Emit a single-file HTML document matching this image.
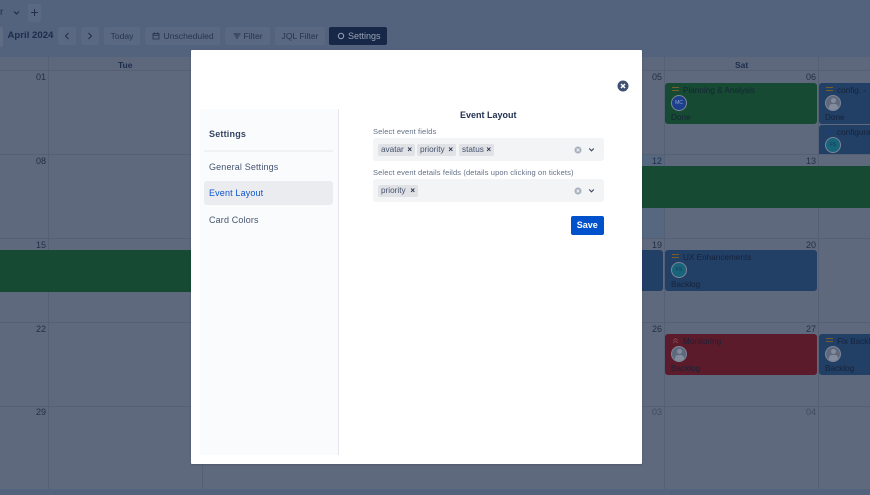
<!DOCTYPE html>
<html><head><meta charset="utf-8">
<style>
html,body{margin:0;padding:0}
body{width:870px;height:495px;overflow:hidden;position:relative;background:#53627d;font-family:"Liberation Sans",sans-serif;color:#25324f}
.a{position:absolute}
.t{position:absolute;white-space:nowrap;line-height:12px}
.btn{position:absolute;top:27px;height:18px;background:#5a6981;border-radius:2px;font-size:8.6px;line-height:18px;text-align:center;color:#26344f;white-space:nowrap}
.hl{position:absolute;left:0;width:870px;height:1px;background:#556074}
.vl{position:absolute;top:57px;height:432px;width:1px;background:#556074}
.n{position:absolute;font-size:9px;line-height:12px;color:#232e47;text-align:right;width:20px}
.e{position:absolute;height:41px;border-radius:3px;overflow:hidden;color:#20304f;font-size:8.2px}
.g{background:#174a32}.b{background:#223f66}.r{background:#5c1b2a}
.e .ti{position:absolute;left:18px;top:2px;line-height:11px;white-space:nowrap;color:#16233a}
.e .st{position:absolute;left:6px;top:29px;line-height:11px;white-space:nowrap;color:#16233a}
.e .p{position:absolute;left:7px;top:4px;width:7px;height:4px;border-top:1px solid #7a5e28;border-bottom:1px solid #7a5e28;box-sizing:border-box}
.e .av{position:absolute;left:6px;top:12px;width:14px;height:14px;border:1px solid #7c8699;border-radius:50%;font-size:5px;line-height:14px;text-align:center;overflow:hidden}
.pa{background:#5f697d}
.pa:before{content:"";position:absolute;left:4.5px;top:2px;width:5px;height:5px;border-radius:50%;background:#838c9c}
.pa:after{content:"";position:absolute;left:2.5px;top:8px;width:9px;height:7px;border-radius:3px 3px 0 0;background:#838c9c}
.box{position:absolute;left:373px;width:230.5px;height:23px;background:#f3f4f6;border-radius:3px}
.tag{position:absolute;top:6px;height:12px;background:#e0e2e6;border-radius:2px;font-size:8.2px;line-height:12px;color:#44506a;box-sizing:border-box}
.tag b{position:absolute;right:3px;top:0;font-size:8px;color:#26324a;font-weight:700}
.lab{position:absolute;left:373px;font-size:7.5px;line-height:10px;color:#626f86;letter-spacing:.13px;white-space:nowrap}
.m{position:absolute;font-size:9px;line-height:12px;color:#44546f;white-space:nowrap;letter-spacing:.15px}
</style></head>
<body>
<!-- top bar -->
<div class="t" style="left:0;top:7px;font-size:10px;color:#222f4a">r</div>
<svg class="a" style="left:13px;top:10px" width="7" height="6" viewBox="0 0 7 6"><path d="M1 1.5L3.5 4L6 1.5" fill="none" stroke="#202b45" stroke-width="1.1"/></svg>
<div class="a" style="left:28px;top:4px;width:13px;height:18px;background:#5a6981;border-radius:2px"></div>
<svg class="a" style="left:30px;top:8px" width="9" height="9" viewBox="0 0 9 9"><path d="M4.5 1v7M1 4.5h7" stroke="#222f4a" stroke-width="1"/></svg>
<div class="a" style="left:0;top:27px;width:3px;height:20px;background:#5f6c84;border-radius:0 2px 2px 0"></div>
<div class="t" style="left:7.5px;top:30px;font-size:9.6px;font-weight:700;color:#1e2c4c">April 2024</div>
<div class="btn" style="left:58px;width:18px"></div>
<svg class="a" style="left:64px;top:32px" width="6" height="8" viewBox="0 0 6 8"><path d="M4.5 1L1.5 4L4.5 7" fill="none" stroke="#222f4a" stroke-width="1.1"/></svg>
<div class="btn" style="left:81px;width:18px"></div>
<svg class="a" style="left:87px;top:32px" width="6" height="8" viewBox="0 0 6 8"><path d="M1.5 1L4.5 4L1.5 7" fill="none" stroke="#222f4a" stroke-width="1.1"/></svg>
<div class="btn" style="left:104px;width:36px">Today</div>
<div class="btn" style="left:145px;width:75px"><span style="position:absolute;left:18.5px">Unscheduled</span></div>
<svg class="a" style="left:152px;top:32px" width="8" height="8" viewBox="0 0 8 8"><path d="M1 1.5h6v5.5H1zM1 3.2h6M2.5.5v1.5M5.5.5v1.5" fill="none" stroke="#222f4a" stroke-width=".8"/></svg>
<div class="btn" style="left:225px;width:45px"><span style="position:absolute;left:18.5px">Filter</span></div>
<svg class="a" style="left:233px;top:33px" width="8" height="7" viewBox="0 0 8 7"><path d="M.5 1h7M1.8 3h4.4M3 5h2" stroke="#222f4a" stroke-width="1"/></svg>
<div class="btn" style="left:275px;width:50px">JQL Filter</div>
<div class="btn" style="left:329px;width:58px;background:#162747;color:#98a2b5;font-size:9px"><span style="position:absolute;left:19px">Settings</span></div>
<svg class="a" style="left:337px;top:32px" width="8" height="8" viewBox="0 0 8 8"><circle cx="4" cy="4" r="2.7" fill="none" stroke="#98a2b5" stroke-width="1"/></svg>

<!-- calendar -->
<div class="a" style="left:0;top:57px;width:870px;height:432px;background:#5f697d"></div>
<div class="a" style="left:0;top:57px;width:870px;height:14px;background:#5d687d"></div>
<div class="a" style="left:642px;top:155px;width:22px;height:83px;background:#556880"></div>
<div class="hl" style="top:70px"></div>
<div class="hl" style="top:154px"></div>
<div class="hl" style="top:238px"></div>
<div class="hl" style="top:322px"></div>
<div class="hl" style="top:406px"></div>
<div class="vl" style="left:48px"></div>
<div class="vl" style="left:202px"></div>
<div class="vl" style="left:664px"></div>
<div class="vl" style="left:818px"></div>
<div class="t" style="left:118px;top:59px;font-size:8.5px;font-weight:700;color:#1e2c4c">Tue</div>
<div class="t" style="left:735px;top:59px;font-size:8.5px;font-weight:700;color:#1e2c4c">Sat</div>
<div class="n" style="left:26px;top:71px">01</div>
<div class="n" style="left:26px;top:155px">08</div>
<div class="n" style="left:26px;top:239px">15</div>
<div class="n" style="left:26px;top:323px">22</div>
<div class="n" style="left:26px;top:406px">29</div>
<div class="n" style="left:642px;top:71px">05</div>
<div class="n" style="left:796px;top:71px">06</div>
<div class="n" style="left:642px;top:155px">12</div>
<div class="n" style="left:796px;top:155px">13</div>
<div class="n" style="left:642px;top:239px">19</div>
<div class="n" style="left:796px;top:239px">20</div>
<div class="n" style="left:642px;top:323px">26</div>
<div class="n" style="left:796px;top:323px">27</div>
<div class="n" style="left:642px;top:406px;color:#404c62">03</div>
<div class="n" style="left:796px;top:406px;color:#404c62">04</div>

<div class="e g" style="left:665px;top:83px;width:152px"><span class="p"></span><span class="ti">Planning &amp; Analysis</span><span class="av" style="background:#1c408c;color:#8fa4cf">MC</span><span class="st">Done</span></div>
<div class="e b" style="left:819px;top:83px;width:60px"><span class="p"></span><span class="ti">config. -</span><span class="av pa"></span><span class="st">Done</span></div>
<div class="e b" style="left:819px;top:125px;width:60px;height:29px;border-radius:3px 0 0 0"><svg class="a" style="left:7px;top:4px" width="7" height="5" viewBox="0 0 7 5"><path d="M1 1l2.5 2.5L6 1" fill="none" stroke="#1c408c" stroke-width="1.2"/></svg><span class="ti">configura</span><span class="av" style="background:#17647b;color:#1c3550">FS</span></div>
<div class="a g" style="left:642px;top:166px;width:228px;height:42px"></div>
<div class="a g" style="left:0;top:250px;width:191px;height:42px"></div>
<div class="a b" style="left:642px;top:250px;width:21px;height:41px;border-radius:0 3px 3px 0"></div>
<div class="e b" style="left:665px;top:250px;width:152px"><span class="p"></span><span class="ti">UX Enhancements</span><span class="av" style="background:#17647b;color:#1c3550">FS</span><span class="st">Backlog</span></div>
<div class="e r" style="left:665px;top:334px;width:152px"><svg class="a" style="left:7px;top:3px" width="7" height="7" viewBox="0 0 7 7"><path d="M1 3.5l2.5-2 2.5 2M1 6l2.5-2 2.5 2" fill="none" stroke="#7d424a" stroke-width=".9"/></svg><span class="ti">Monitoring</span><span class="av pa"></span><span class="st">Backlog</span></div>
<div class="e b" style="left:819px;top:334px;width:60px"><span class="p"></span><span class="ti">Fix Backlog</span><span class="av pa"></span><span class="st">Backlog</span></div>

<!-- modal -->
<div class="a" style="left:191px;top:50px;width:451px;height:414px;background:#fff;border-radius:1px;box-shadow:0 1px 2px rgba(30,40,60,.25)"></div>
<svg class="a" style="left:617px;top:80px" width="12" height="12" viewBox="0 0 12 12"><circle cx="6" cy="6" r="5.5" fill="#3f5173"/><path d="M4 4l4 4M8 4l-4 4" stroke="#fff" stroke-width="1.5"/></svg>

<div class="a" style="left:200px;top:109px;width:138px;height:346px;background:#fafbfc;border-right:1px solid #e4e6ea"></div>
<div class="t" style="left:209px;top:128px;font-size:9px;font-weight:700;color:#344563;letter-spacing:.2px">Settings</div>
<div class="a" style="left:204px;top:150px;width:129px;height:2px;background:#f0f1f3"></div>
<div class="m" style="left:209px;top:160.5px">General Settings</div>
<div class="a" style="left:204px;top:181px;width:129px;height:24px;background:#ebecf0;border-radius:3px"></div>
<div class="m" style="left:209px;top:187px;color:#0c55cf">Event Layout</div>
<div class="m" style="left:209px;top:213.5px">Card Colors</div>

<div class="t" style="left:460px;top:109px;font-size:9px;font-weight:700;color:#1f2f50">Event Layout</div>
<div class="lab" style="top:127px">Select event fields</div>
<div class="box" style="top:138px">
  <div class="tag" style="left:5px;width:37px;padding-left:3px">avatar<b>×</b></div>
  <div class="tag" style="left:44px;width:39px;padding-left:3px">priority<b>×</b></div>
  <div class="tag" style="left:86px;width:35px;padding-left:3px">status<b>×</b></div>
  <svg class="a" style="left:201px;top:8px" width="8" height="8" viewBox="0 0 8 8"><circle cx="4" cy="4" r="3.5" fill="#a8b0be"/><path d="M2.6 2.6l2.8 2.8M5.4 2.6L2.6 5.4" stroke="#f3f4f6" stroke-width=".9"/></svg>
  <svg class="a" style="left:215px;top:9px" width="7" height="6" viewBox="0 0 7 6"><path d="M1.2 1.5L3.5 3.8L5.8 1.5" fill="none" stroke="#3a4660" stroke-width="1.1"/></svg>
</div>
<div class="lab" style="top:168px">Select event details feilds (details upon clicking on tickets)</div>
<div class="box" style="top:179px">
  <div class="tag" style="left:5px;width:40px;padding-left:3px">priority<b>×</b></div>
  <svg class="a" style="left:201px;top:8px" width="8" height="8" viewBox="0 0 8 8"><circle cx="4" cy="4" r="3.5" fill="#a8b0be"/><path d="M2.6 2.6l2.8 2.8M5.4 2.6L2.6 5.4" stroke="#f3f4f6" stroke-width=".9"/></svg>
  <svg class="a" style="left:215px;top:9px" width="7" height="6" viewBox="0 0 7 6"><path d="M1.2 1.5L3.5 3.8L5.8 1.5" fill="none" stroke="#3a4660" stroke-width="1.1"/></svg>
</div>
<div class="a" style="left:571px;top:216px;width:32.5px;height:19px;background:#0052cc;border-radius:2px;color:#fff;font-size:9px;font-weight:700;line-height:19px;text-align:center">Save</div>
</body></html>
